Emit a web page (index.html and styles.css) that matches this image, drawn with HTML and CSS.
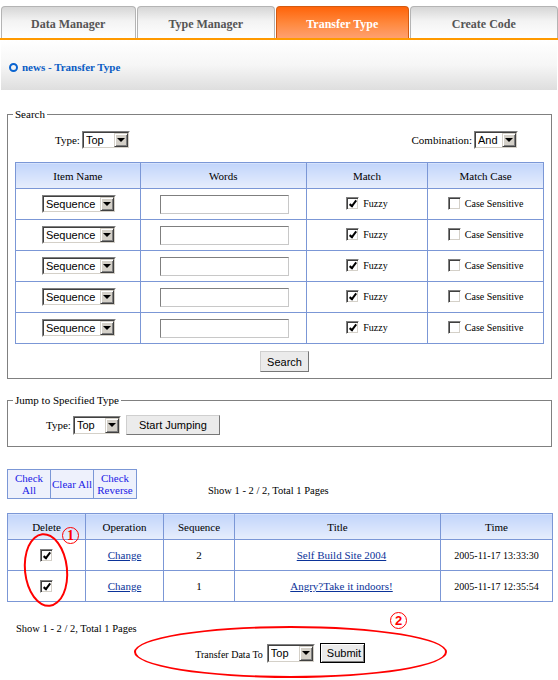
FILE: index.html
```html
<!DOCTYPE html>
<html lang="en">
<head>
  <meta charset="UTF-8">
  <meta name="viewport" content="width=device-width, initial-scale=1.0">
  <title>Transfer Type</title>
  <link rel="stylesheet" href="styles.css">
</head>
<body>
  <div class="tabs">
    <a class="tab tab-1">Data Manager</a>
    <a class="tab tab-2">Type Manager</a>
    <a class="tab tab-3 active">Transfer Type</a>
    <a class="tab tab-4">Create Code</a>
  </div>
  <div class="crumb"><span class="ring"></span>news - Transfer Type</div>

  <fieldset class="box search-box">
    <legend>Search</legend>
    <div class="search-top">
      <label>Type:
        <span class="sel sel-type"><select><option>Top</option></select></span>
      </label>
      <label>Combination:
        <span class="sel sel-and"><select><option>And</option></select></span>
      </label>
    </div>
    <table class="grid search-grid">
      <colgroup>
        <col style="width:125px"><col style="width:166px"><col style="width:122px"><col style="width:116px">
      </colgroup>
      <thead>
        <tr><th>Item Name</th><th>Words</th><th>Match</th><th>Match Case</th></tr>
      </thead>
      <tbody id="search-rows">
        <!-- rows filled by script -->
      </tbody>
    </table>
    <div class="center"><button class="btn btn-search">Search</button></div>
  </fieldset>

  <fieldset class="box jump-box">
    <legend>Jump to Specified Type</legend>
    <div class="jump-row">
      <label>Type:
        <span class="sel sel-type"><select><option>Top</option></select></span>
      </label>
      <button class="btn btn-jump">Start Jumping</button>
    </div>
  </fieldset>

  <div class="list-bar">
    <table class="checks">
      <tr>
        <td>Check<br>All</td>
        <td>Clear All</td>
        <td>Check<br>Reverse</td>
      </tr>
    </table>
    <span class="pager pager-top">Show 1 - 2 / 2, Total 1 Pages</span>
  </div>

  <table class="grid data-grid">
    <colgroup>
      <col style="width:78px"><col style="width:78px"><col style="width:71px"><col style="width:206px"><col style="width:112px">
    </colgroup>
    <thead>
      <tr><th>Delete</th><th>Operation</th><th>Sequence</th><th>Title</th><th>Time</th></tr>
    </thead>
    <tbody>
      <tr>
        <td><input type="checkbox" checked></td>
        <td><a href="#">Change</a></td>
        <td>2</td>
        <td class="title"><a href="#">Self Build Site 2004</a></td>
        <td class="time">2005-11-17 13:33:30</td>
      </tr>
      <tr>
        <td><input type="checkbox" checked></td>
        <td><a href="#">Change</a></td>
        <td>1</td>
        <td class="title"><a href="#">Angry?Take it indoors!</a></td>
        <td class="time">2005-11-17 12:35:54</td>
      </tr>
    </tbody>
  </table>

  <div class="pager pager-bottom">Show 1 - 2 / 2, Total 1 Pages</div>

  <div class="transfer">
    <span class="transfer-label">Transfer Data To</span>
    <span class="sel sel-type"><select><option>Top</option></select></span>
    <button class="btn btn-submit">Submit</button>
  </div>

  <!-- red annotation marks -->
  <div class="mark ellipse-1"></div>
  <div class="mark num num-1">1</div>
  <div class="mark ellipse-2"></div>
  <div class="mark num num-2">2</div>

  <script>
    // five identical search rows
    const rows = document.getElementById('search-rows');
    for (let i = 0; i < 5; i++) {
      const tr = document.createElement('tr');
      tr.innerHTML =
        '<td><span class="sel sel-seq"><select><option>Sequence</option></select></span></td>' +
        '<td><input type="text" class="words"></td>' +
        '<td><label class="opt"><input type="checkbox" checked> Fuzzy</label></td>' +
        '<td><label class="opt"><input type="checkbox"> Case Sensitive</label></td>';
      rows.appendChild(tr);
    }
  </script>
</body>
</html>
```

FILE: styles.css
```css
body {
  margin: 0;
  background: #fff;
  color: #000;
  font-family: "Liberation Serif", "Times New Roman", serif;
  font-size: 11px;
  position: relative;
  height: 680px;
  overflow: hidden;
}
a {
  color: #0b3399;
}

/* tabs */
.tabs {
  display: flex;
  gap: 1px;
  padding: 6px 0 0 1px;
  border-bottom: 2px solid #ff9a00;
}
.tab {
  box-sizing: border-box;
  height: 32px;
  padding-top: 2px;
  line-height: 31px;
  text-align: center;
  font-weight: bold;
  font-size: 12px;
  color: #555;
  border: 1px solid #b4b4b4;
  border-bottom: none;
  border-radius: 4px 4px 0 0;
  background: linear-gradient(#d6d6d6, #f3f3f3 45%, #fff);
}
.tab-1 { width: 135px; }
.tab-2 { width: 139px; }
.tab-3 { width: 133px; }
.tab-4 { width: 149px; }
.tab.active {
  color: #fff;
  border-color: #d45a10;
  background: linear-gradient(#ff640a, #ff8a40 55%, #ffa070);
}

.crumb {
  box-sizing: border-box;
  height: 50px;
  margin: 0 1px;
  padding: 21px 0 0 8px;
  line-height: 13px;
  font-weight: bold;
  color: #0a5cc4;
  background: linear-gradient(#fff, #f6f6f6 50%, #dedede);
}
.ring {
  display: inline-block;
  box-sizing: border-box;
  width: 9px;
  height: 9px;
  border: 2.5px solid #0a64d0;
  border-radius: 50%;
  margin-right: 4px;
  vertical-align: -1px;
}

/* fieldsets */
.box {
  border: 1px solid #808080;
  margin: 18px 6px 0 7px;
  padding: 0 7px 6px;
  min-width: 0;
}
.box legend {
  padding: 0 2px;
  margin-left: -2px;
  line-height: 13px;
}
.search-top {
  display: flex;
  justify-content: space-between;
  align-items: center;
  padding: 10px 26px 0 40px;
}
.search-top label,
.jump-row label {
  display: flex;
  align-items: center;
  gap: 2px;
}
.search-grid {
  margin-top: 13px;
}
.center {
  text-align: center;
  padding: 7px 0 0 10px;
}
.jump-box {
  margin-top: 15px;
  padding-bottom: 11px;
}
.jump-row {
  display: flex;
  align-items: center;
  gap: 5px;
  padding: 8px 0 0 31px;
}

/* grids */
.grid {
  border-collapse: collapse;
  table-layout: fixed;
  border: 1px solid #7b97d6;
}
.grid th,
.grid td {
  border: 1px solid #7b97d6;
  text-align: center;
  padding: 0;
}
.grid th {
  font-weight: normal;
  height: 25px;
  background: linear-gradient(#c2d5fb, #e7eefc);
}
.grid td {
  height: 30px;
}
.grid td.title {
  padding-left: 8px;
}
.grid td.time {
  font-size: 10px;
}
.words {
  box-sizing: border-box;
  width: 129px;
  height: 19px;
  margin: 0 0 0 2px;
  border: 1px solid;
  border-color: #7f7f7f #c8c8c8 #c8c8c8 #7f7f7f;
  vertical-align: middle;
}
.opt {
  display: inline-flex;
  align-items: center;
  gap: 4px;
  font-size: 10px;
}
.opt input {
  margin-right: 4px;
}

/* classic select */
.sel {
  position: relative;
  display: inline-block;
  vertical-align: middle;
  border: 1px solid;
  border-color: #808080 #fff #fff #808080;
}
.sel select {
  -webkit-appearance: none;
  appearance: none;
  display: block;
  box-sizing: border-box;
  height: 16px;
  margin: 0;
  padding: 0 0 0 2px;
  border: 1px solid;
  border-color: #404040 #d4d0c8 #d4d0c8 #404040;
  border-radius: 0;
  background: #fff;
  color: #000;
  font: 11px "Liberation Sans", Arial, sans-serif;
}
.sel::before {
  content: '';
  position: absolute;
  top: 1px;
  right: 1px;
  bottom: 1px;
  width: 14px;
  box-sizing: border-box;
  background: #d4d0c8;
  border: 1px solid;
  border-color: #d4d0c8 #404040 #404040 #d4d0c8;
  box-shadow: inset 1px 1px #fff, inset -1px -1px #808080;
  pointer-events: none;
}
.sel::after {
  content: '';
  position: absolute;
  top: 6px;
  right: 4px;
  border-left: 4px solid transparent;
  border-right: 4px solid transparent;
  border-top: 4px solid #000;
  pointer-events: none;
}
.sel-seq select { width: 72px; }
.sel-seq { margin-left: 2px; }
.sel-type select { width: 46px; }
.sel-and select { width: 42px; }
.jump-row .sel select,
.transfer .sel select { height: 17px; }

/* classic checkbox */
input[type="checkbox"] {
  -webkit-appearance: none;
  appearance: none;
  position: relative;
  box-sizing: border-box;
  width: 13px;
  height: 13px;
  margin: 0;
  border: 1px solid;
  border-color: #808080 #fff #fff #808080;
  box-shadow: inset 1px 1px #404040, inset -1px -1px #d4d0c8;
  background: #fff;
  vertical-align: middle;
}
input[type="checkbox"]:checked::after {
  content: '';
  position: absolute;
  left: 4px;
  top: 1px;
  width: 2px;
  height: 6px;
  border: solid #000;
  border-width: 0 2px 2px 0;
  transform: rotate(38deg);
}

/* buttons */
.btn {
  font: 11px "Liberation Sans", Arial, sans-serif;
  color: #000;
  background: #ebebeb;
  border: 1px solid;
  border-color: #cfcfcf #777 #777 #cfcfcf;
  margin: 0;
  cursor: pointer;
}
.btn-search { width: 49px; height: 21px; }
.btn-jump { width: 94px; height: 20px; }
.btn-submit {
  width: 45px;
  height: 20px;
  border-color: #000;
  box-shadow: inset 1px 1px #fff, inset -1px -1px #808080;
}

/* list area */
.list-bar {
  display: flex;
  align-items: flex-end;
  margin: 22px 0 0 7px;
}
.checks {
  border-collapse: collapse;
  table-layout: fixed;
}
.checks td {
  width: 42px;
  height: 28px;
  padding: 0;
  border: 1px solid #7b97d6;
  background: #eef1fc;
  color: #1a1ae6;
  text-align: center;
  line-height: 12px;
}
.pager {
  line-height: 13px;
  font-size: 10.5px;
}
.pager-top {
  margin: 0 0 2px 71px;
}
.data-grid {
  width: 545px;
  margin: 14px 0 0 7px;
}
.pager-bottom {
  margin: 20px 0 0 16px;
}
.transfer {
  display: flex;
  justify-content: center;
  align-items: center;
  gap: 4px;
  margin-top: 8px;
  padding-left: 2px;
}
.transfer-label {
  font-size: 10px;
  padding-top: 3px;
}
.transfer .sel {
  margin-right: 1px;
}

/* red annotations */
.mark {
  position: absolute;
  box-sizing: border-box;
  border: 2px solid #f00;
  border-radius: 50%;
  pointer-events: none;
}
.ellipse-1 {
  left: 24px;
  top: 533px;
  width: 44px;
  height: 74px;
  transform: rotate(-6deg);
}
.ellipse-2 {
  left: 134px;
  top: 626px;
  width: 313px;
  height: 52px;
}
.num {
  border-width: 1px;
  color: #f00;
  text-align: center;
  font-weight: bold;
}
.num-1 {
  left: 62px;
  top: 527px;
  width: 17px;
  height: 17px;
  line-height: 15px;
  font-size: 14px;
}
.num-2 {
  left: 390px;
  top: 612px;
  width: 17px;
  height: 17px;
  line-height: 15px;
  font: bold 13px/15px "Liberation Sans", Arial, sans-serif;
}
```
